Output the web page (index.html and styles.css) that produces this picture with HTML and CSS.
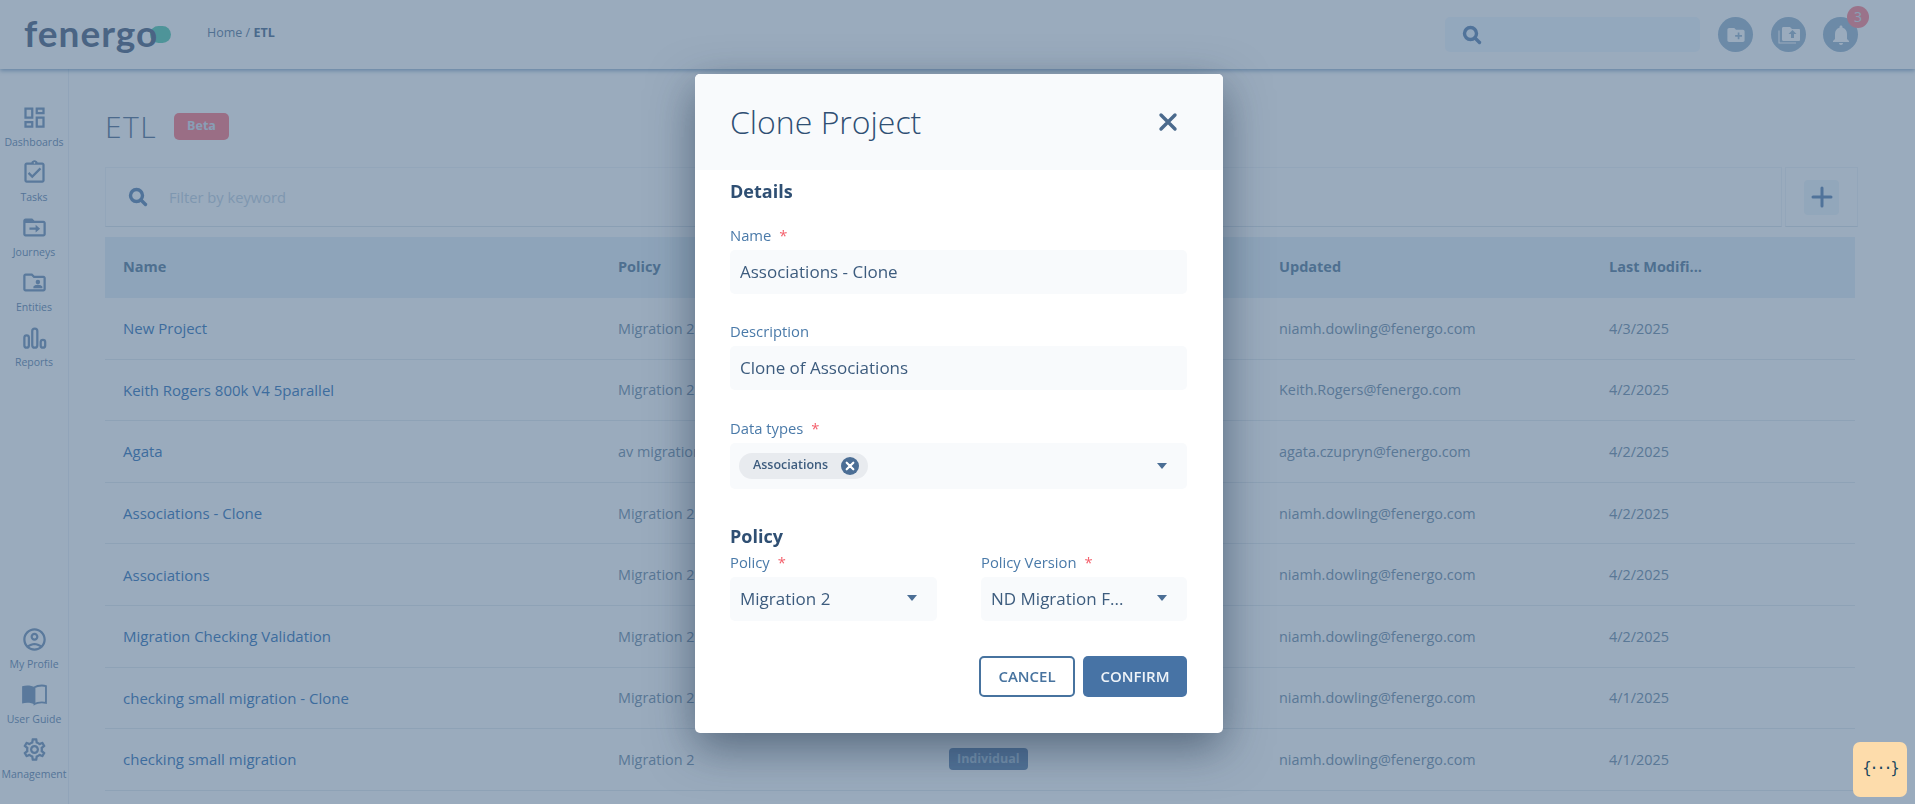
FILE: index.html
```html
<!DOCTYPE html>
<html lang="en">
<head>
<meta charset="utf-8">
<title>ETL</title>
<link rel="stylesheet" href="styles.css">
</head>
<body>
<div class="app">
  <header class="topbar">
    <div class="logo"><span class="logo-pill"></span><span class="logo-text">fenergo</span></div>
    <div class="crumbs">Home / <b>ETL</b></div>
    <div class="top-search">
      <svg class="search-ico" viewBox="0 0 20 20"><circle cx="8.5" cy="8.5" r="6" fill="none" stroke="currentColor" stroke-width="3.4"/><path d="M13 13l4.5 4.5" stroke="currentColor" stroke-width="3.4" stroke-linecap="round"/></svg>
    </div>
    <div class="round"><svg viewBox="0 0 24 24"><path fill="#fff" d="M20 6h-8l-2-2H4c-1.1 0-2 .9-2 2v12c0 1.1.9 2 2 2h16c1.1 0 2-.9 2-2V8c0-1.1-.9-2-2-2zm-1 8h-3v3h-2v-3h-3v-2h3V9h2v3h3v2z" transform="translate(12 12) scale(.86) translate(-12 -12)"/></svg></div>
    <div class="round"><svg viewBox="0 0 24 24"><path fill="none" stroke="#fff" stroke-width="1.1" d="M2 7.5V20h17"/><path fill="#fff" d="M22 6h-7l-2-2H6.500c-1 0-1.500.7-1.500 1.500V16.500c0 .8.600 1.500 1.500 1.500H22c.8 0 1-.7 1-1.500V7.500C23 6.700 22.800 6 22 6zm-5 5v4h-3v-4h-2.500l4-4 4 4z"/></svg></div>
    <div class="round bell"><svg viewBox="0 0 24 24"><path fill="#fff" d="M12 22c1.100 0 2-.9 2-2h-4c0 1.100.9 2 2 2zm6-6v-5c0-3.100-1.600-5.600-4.500-6.300V4c0-.8-.7-1.500-1.500-1.500s-1.500.7-1.500 1.500v.7C7.600 5.400 6 7.900 6 11v5l-2 2v1h16v-1z"/></svg><span class="bell-count">3</span></div>
  </header>

  <div class="workspace">
    <nav class="sidebar">
      <div class="side-group">
        <a class="side-item"><svg viewBox="0 0 24 24"><path d="M19 5v2h-4V5h4M9 5v6H5V5h4m10 8v6h-4v-6h4M9 17v2H5v-2h4M21 3h-8v6h8V3zM11 3H3v10h8V3zm10 8h-8v10h8V11zm-10 4H3v6h8v-6z"/></svg><span>Dashboards</span></a>
        <a class="side-item"><svg viewBox="0 0 24 24"><path d="M18 9l-1.400-1.400-6.600 6.600-2.600-2.600L6 13l4 4zM19 3h-4.180C14.400 1.840 13.300 1 12 1s-2.400.84-2.820 2H5c-1.100 0-2 .9-2 2v14c0 1.100.9 2 2 2h14c1.100 0 2-.9 2-2V5c0-1.100-.9-2-2-2zm-7-.25c.41 0 .75.34.75.75s-.34.75-.75.75-.75-.34-.75-.75.34-.75.75-.75zM19 19H5V5h14v14z"/></svg><span>Tasks</span></a>
        <a class="side-item"><svg viewBox="0 0 24 24"><path d="M20 6h-8l-2-2H4c-1.100 0-2 .9-2 2v12c0 1.100.9 2 2 2h16c1.100 0 2-.9 2-2V8c0-1.100-.9-2-2-2zm0 12H4V8h16v10z"/><path d="M7.500 12h5.500V9.500l4 3.500-4 3.500V14H7.500z"/></svg><span>Journeys</span></a>
        <a class="side-item"><svg viewBox="0 0 24 24"><path d="M20 6h-8l-2-2H4c-1.100 0-2 .9-2 2v12c0 1.100.9 2 2 2h16c1.100 0 2-.9 2-2V8c0-1.100-.9-2-2-2zm0 12H4V6h5.200l2 2H20v10z"/><circle cx="15" cy="11.500" r="2"/><path d="M11 17v-1c0-1.300 2.700-2 4-2s4 .7 4 2v1z"/></svg><span>Entities</span></a>
        <a class="side-item"><svg viewBox="0 0 24 24"><g fill="none" stroke="currentColor" stroke-width="2"><rect x="3" y="10" width="4" height="11" rx="2"/><rect x="10" y="4" width="4.500" height="17" rx="2.200"/><rect x="17.500" y="14" width="4" height="7" rx="2"/></g></svg><span>Reports</span></a>
      </div>
      <div class="side-group">
        <a class="side-item"><svg viewBox="0 0 24 24"><path d="M12 2C6.480 2 2 6.480 2 12s4.480 10 10 10 10-4.480 10-10S17.520 2 12 2zM7.350 18.500C8.660 17.560 10.260 17 12 17s3.340.56 4.650 1.500c-1.310.94-2.910 1.500-4.650 1.500s-3.340-.56-4.650-1.500zm10.790-1.380C16.450 15.800 14.320 15 12 15s-4.450.8-6.140 2.120C4.700 15.730 4 13.950 4 12c0-4.420 3.580-8 8-8s8 3.580 8 8c0 1.950-.7 3.730-1.860 5.120z"/><path d="M12 6c-1.930 0-3.500 1.570-3.500 3.500S10.070 13 12 13s3.500-1.570 3.500-3.500S13.930 6 12 6zm0 5c-.83 0-1.500-.67-1.500-1.500S11.170 8 12 8s1.500.67 1.500 1.500S12.830 11 12 11z"/></svg><span>My Profile</span></a>
        <a class="side-item"><svg viewBox="0 0 24 24"><path d="M12 5.500C10.500 4.500 8 4 5.500 4 4 4 2.500 4.200 1 4.700V20c1.500-.5 3-.7 4.500-.7 2.500 0 5 .5 6.500 1.500z"/><path fill="none" stroke="currentColor" stroke-width="1.600" d="M12 5.500c1.500-1 4-1.500 6.500-1.500 1.300 0 2.600.1 3.700.5V19.500c-1.100-.3-2.400-.5-3.700-.5-2.500 0-5 .5-6.500 1.500z"/></svg><span>User Guide</span></a>
        <a class="side-item"><svg viewBox="0 0 24 24"><path d="M19.430 12.980c.04-.32.07-.64.07-.98 0-.34-.03-.66-.07-.98l2.110-1.650c.19-.15.24-.42.12-.64l-2-3.460c-.09-.16-.26-.25-.44-.25-.06 0-.12.01-.17.03l-2.490 1c-.52-.4-1.080-.73-1.690-.98l-.38-2.650C14.460 2.180 14.250 2 14 2h-4c-.25 0-.46.18-.49.42l-.38 2.650c-.61.25-1.170.59-1.690.98l-2.490-1c-.06-.02-.12-.03-.18-.03-.17 0-.34.09-.43.25l-2 3.460c-.13.22-.07.49.12.64l2.110 1.650c-.04.32-.07.65-.07.98 0 .33.03.66.07.98l-2.110 1.650c-.19.15-.24.42-.12.64l2 3.460c.09.16.26.25.44.25.06 0 .12-.01.17-.03l2.490-1c.52.4 1.080.73 1.690.98l.38 2.650c.03.24.24.42.49.42h4c.25 0 .46-.18.49-.42l.38-2.650c.61-.25 1.170-.59 1.690-.98l2.490 1c.06.02.12.03.18.03.17 0 .34-.09.43-.25l2-3.460c.12-.22.07-.49-.12-.64l-2.110-1.650zm-1.980-1.710c.04.31.05.52.05.73 0 .21-.02.43-.05.73l-.14 1.130.89.7 1.080.84-.7 1.210-1.270-.51-1.040-.42-.9.68c-.43.32-.84.56-1.250.73l-1.060.43-.16 1.130-.2 1.350h-1.400l-.19-1.350-.16-1.130-1.060-.43c-.43-.18-.83-.41-1.230-.71l-.91-.7-1.060.43-1.270.51-.7-1.210 1.080-.84.89-.7-.14-1.130c-.03-.31-.05-.54-.05-.74s.02-.43.05-.73l.14-1.130-.89-.7-1.080-.84.7-1.210 1.270.51 1.040.42.9-.68c.43-.32.84-.56 1.250-.73l1.060-.43.16-1.130.2-1.350h1.390l.19 1.350.16 1.130 1.060.43c.43.18.83.41 1.230.71l.91.7 1.060-.43 1.270-.51.7 1.210-1.070.85-.89.7.14 1.130zM12 8c-2.210 0-4 1.790-4 4s1.790 4 4 4 4-1.790 4-4-1.790-4-4-4zm0 6c-1.100 0-2-.9-2-2s.9-2 2-2 2 .9 2 2-.9 2-2 2z"/></svg><span>Management</span></a>
      </div>
    </nav>

    <main class="content">
      <div class="title-row"><h1>ETL</h1><span class="beta">Beta</span></div>
      <div class="toolbar">
        <div class="filter">
          <svg class="search-ico" viewBox="0 0 20 20"><circle cx="8.500" cy="8.500" r="6" fill="none" stroke="currentColor" stroke-width="3.400"/><path d="M13 13l4.500 4.500" stroke="currentColor" stroke-width="3.400" stroke-linecap="round"/></svg>
          <span class="placeholder">Filter by keyword</span>
        </div>
        <div class="add-box"><div class="add-btn"><svg viewBox="0 0 24 24"><path d="M12 3v18M3 12h18" stroke="currentColor" stroke-width="3" stroke-linecap="round"/></svg></div></div>
      </div>
      <div class="table">
        <div class="row head"><div>Name</div><div>Policy</div><div></div><div>Updated</div><div>Last Modifi...</div></div>
        <div class="row"><div class="link">New Project</div><div>Migration 2</div><div></div><div>niamh.dowling@fenergo.com</div><div>4/3/2025</div></div>
        <div class="row"><div class="link">Keith Rogers 800k V4 5parallel</div><div>Migration 2</div><div></div><div>Keith.Rogers@fenergo.com</div><div>4/2/2025</div></div>
        <div class="row"><div class="link">Agata</div><div>av migration</div><div></div><div>agata.czupryn@fenergo.com</div><div>4/2/2025</div></div>
        <div class="row"><div class="link">Associations - Clone</div><div>Migration 2</div><div></div><div>niamh.dowling@fenergo.com</div><div>4/2/2025</div></div>
        <div class="row"><div class="link">Associations</div><div>Migration 2</div><div></div><div>niamh.dowling@fenergo.com</div><div>4/2/2025</div></div>
        <div class="row"><div class="link">Migration Checking Validation</div><div>Migration 2</div><div></div><div>niamh.dowling@fenergo.com</div><div>4/2/2025</div></div>
        <div class="row"><div class="link">checking small migration - Clone</div><div>Migration 2</div><div></div><div>niamh.dowling@fenergo.com</div><div>4/1/2025</div></div>
        <div class="row"><div class="link">checking small migration</div><div>Migration 2</div><div><span class="tag">Individual</span></div><div>niamh.dowling@fenergo.com</div><div>4/1/2025</div></div>
      </div>
    </main>
  </div>
</div>

<div class="overlay">
  <section class="modal">
    <div class="modal-head">
      <h2>Clone Project</h2>
      <svg class="close" viewBox="0 0 20 20"><path d="M3 3l14 14M17 3L3 17" stroke="currentColor" stroke-width="3.400" stroke-linecap="round"/></svg>
    </div>
    <div class="modal-body">
      <h3 class="details">Details</h3>
      <div class="field gap30">
        <div class="label">Name <i>*</i></div>
        <div class="input">Associations - Clone</div>
      </div>
      <div class="field gap31">
        <div class="label">Description</div>
        <div class="input">Clone of Associations</div>
      </div>
      <div class="field gap35">
        <div class="label">Data types <i>*</i></div>
        <div class="input multi">
          <span class="chip"><span class="chip-text">Associations</span><svg viewBox="0 0 18 18"><circle cx="9" cy="9" r="9" fill="#4b6e95"/><path d="M5.700 5.700l6.600 6.600M12.300 5.700l-6.600 6.600" stroke="#fff" stroke-width="2.200" stroke-linecap="round"/></svg></span>
          <span class="caret"></span>
        </div>
      </div>
      <h3 class="policy">Policy</h3>
      <div class="two-col">
        <div class="field">
          <div class="label">Policy <i>*</i></div>
          <div class="input select"><span>Migration 2</span><span class="caret"></span></div>
        </div>
        <div class="field">
          <div class="label">Policy Version <i>*</i></div>
          <div class="input select"><span>ND Migration F...</span><span class="caret"></span></div>
        </div>
      </div>
      <div class="actions">
        <button class="btn ghost">CANCEL</button>
        <button class="btn solid">CONFIRM</button>
      </div>
    </div>
  </section>
</div>

<div class="widget">{···}</div>
</body>
</html>
```

FILE: styles.css
```css
* { box-sizing: border-box; }
html, body { margin: 0; height: 100%; overflow: hidden; }
body { font-family: "Open Sans", "Lato", sans-serif; background: #fff; color: #8aa2b8; }

.app { display: flex; flex-direction: column; height: 804px; }

/* top bar */
.topbar { display: flex; align-items: center; height: 69px; padding-left: 24px; background: #fff; box-shadow: 0 2px 4px rgba(60, 110, 160, .45); position: relative; }
.logo { position: relative; width: 147px; height: 44px; font-family: "Lato", sans-serif; line-height: 40px; font-size: 37px; font-weight: 700; letter-spacing: 1px; color: #6d7f97; }
.logo-text { position: relative; }
.logo-pill { position: absolute; left: 126px; top: 13px; width: 21px; height: 17px; border-radius: 9px; background: #76d5bd; }
.crumbs { margin: 0 0 4px 36px; font-size: 12.5px; color: #7a94b0; }
.crumbs b { color: #6d87a5; font-weight: 700; }
.top-search { display: flex; align-items: center; width: 255px; height: 35px; margin-left: auto; padding-left: 17px; border-radius: 5px; background: #f3f9ff; color: #7899bf; }
.search-ico { width: 20px; height: 20px; flex: none; }
.round { position: relative; display: flex; align-items: center; justify-content: center; width: 35px; height: 35px; margin-left: 18px; border-radius: 50%; background: #abc3d8; }
.round svg { width: 24px; height: 24px; }
.round.bell { margin: 0 57px 0 17px; }
.bell-count { position: absolute; left: 24px; top: -11px; width: 22px; height: 22px; border-radius: 50%; background: #ff9aa2; color: #dfe8f0; font-size: 14px; line-height: 22px; text-align: center; }

/* sidebar */
.workspace { display: flex; flex: 1; min-height: 0; }
.sidebar { display: flex; flex-direction: column; justify-content: space-between; flex: none; width: 69px; padding: 37px 0 11px; border-right: 1px solid #eef3f7; }
.side-item { display: flex; flex-direction: column; align-items: center; height: 55px; color: #8aa5c3; }
.side-item svg { width: 27px; height: 27px; margin: -2px 0 -1px; fill: currentColor; }
.side-item span { margin-top: 5px; font-size: 10.5px; line-height: 14px; white-space: nowrap; color: #7f9cbc; }

/* content */
.content { flex: 1; min-width: 0; padding: 44px 57px 0 36px; }
.title-row { display: flex; align-items: center; height: 27px; }
.title-row h1 { margin: 0; width: 69px; font-size: 30px; font-weight: 300; letter-spacing: 1.5px; line-height: 27px; color: #7189a6; }
.beta { display: block; width: 55px; height: 27px; border-radius: 5px; background: #ff9199; color: #dfe8f2; font-size: 12.5px; font-weight: 700; line-height: 26px; text-align: center; }
.toolbar { display: flex; height: 60px; margin-top: 27px; }
.filter { display: flex; flex: 1; align-items: center; padding-left: 22px; border: 1px solid #f3f6f9; border-bottom-color: #e2e9ef; color: #7899bf; }
.placeholder { margin-left: 21px; font-size: 14.7px; color: #cddae7; }
.add-box { display: flex; align-items: center; justify-content: center; flex: none; width: 73px; margin-left: 3px; border: 1px solid #f3f6f9; border-bottom-color: #e2e9ef; }
.add-btn { display: flex; align-items: center; justify-content: center; width: 35px; height: 35px; border-radius: 4px; background: #f1f7fc; color: #7899bf; }
.add-btn svg { width: 24px; height: 24px; }

.table { width: 1750px; margin-top: 10px; }
.row { display: grid; grid-template-columns: 495px 331px 330px 330px 1fr; align-items: center; height: 61.6px; padding-left: 18px; border-bottom: 1px solid #e9eef2; font-size: 14.4px; }
.row.head { height: 61px; padding-bottom: 2px; border-bottom: 0; background: #eaf3f9; color: #7693ad; font-size: 14.5px; font-weight: 700; }
.link { font-size: 15px; color: #578dc6; }
.tag { display: inline-block; height: 22px; padding: 0 8px; border-radius: 4px; background: #7d99bb; color: #bcd0e2; font-size: 12.5px; font-weight: 700; line-height: 21px; }

/* modal */
.overlay { position: fixed; inset: 0; z-index: 5; display: flex; align-items: flex-start; justify-content: center; padding: 74px 0 0 3px; background: rgba(31, 69, 109, .45); }
.modal { width: 528px; height: 659px; border-radius: 5px; overflow: hidden; background: #fff; box-shadow: 0 14px 45px rgba(15, 35, 60, .5); }
.modal-head { display: flex; align-items: center; justify-content: space-between; height: 96px; padding: 0 45px 0 35px; background: #f8fafc; }
.modal-head h2 { margin: 0 0 2px; font-size: 32px; font-weight: 300; color: #2f4f73; }
.close { width: 20px; height: 20px; color: #4b6a8d; }
.modal-body { padding: 9px 36px 0 35px; }
h3 { margin: 0; font-size: 18px; line-height: 24px; font-weight: 700; color: #2f4f73; }
.details { margin-bottom: 25px; }
.policy { margin-bottom: 7px; }
.gap30 { margin-bottom: 30px; }
.gap31 { margin-bottom: 31px; }
.gap35 { margin-bottom: 35px; }
.label { height: 18px; margin-bottom: 4px; font-size: 14.8px; line-height: 15px; color: #4a7aa9; }
.label i { margin-left: 4px; font-style: normal; color: #f4606c; }
.input { display: flex; align-items: center; height: 44px; padding: 0 10px 2px; border-radius: 5px; background: #f8fafc; font-size: 17px; color: #3d5c7e; }
.input.multi { justify-content: space-between; height: 46px; padding: 0 20px 0 9px; }
.input.select { justify-content: space-between; padding-right: 20px; }
.chip { display: flex; align-items: center; gap: 13px; width: 129px; height: 26px; padding: 0 8px 0 14px; border-radius: 13px; background: #e8ebef; font-size: 12.5px; font-weight: 600; color: #3d5c7e; }
.chip-text { margin-bottom: 3px; }
.chip svg { width: 18px; height: 18px; flex: none; }
.caret { width: 0; height: 0; border-left: 5.5px solid transparent; border-right: 5.5px solid transparent; border-top: 6px solid #4b6e95; }
.two-col { display: grid; grid-template-columns: 207px 206px; column-gap: 44px; }
.actions { display: flex; justify-content: flex-end; gap: 8px; margin-top: 35px; }
.btn { height: 41px; padding: 0 0 2px; border-radius: 5px; font: 600 15px "Open Sans", "Lato", sans-serif; }
.ghost { width: 96px; border: 2px solid #47739f; background: #fff; color: #47739f; }
.solid { width: 104px; border: 0; background: #4773a5; color: #eef3f8; }

/* floating widget */
.widget { position: fixed; z-index: 6; left: 1853px; top: 742px; width: 54px; height: 55px; border-radius: 7px; background: #fddcab; color: #17465e; font: 15px/53px "DejaVu Sans Mono", monospace; letter-spacing: -2px; text-align: center; }
```
